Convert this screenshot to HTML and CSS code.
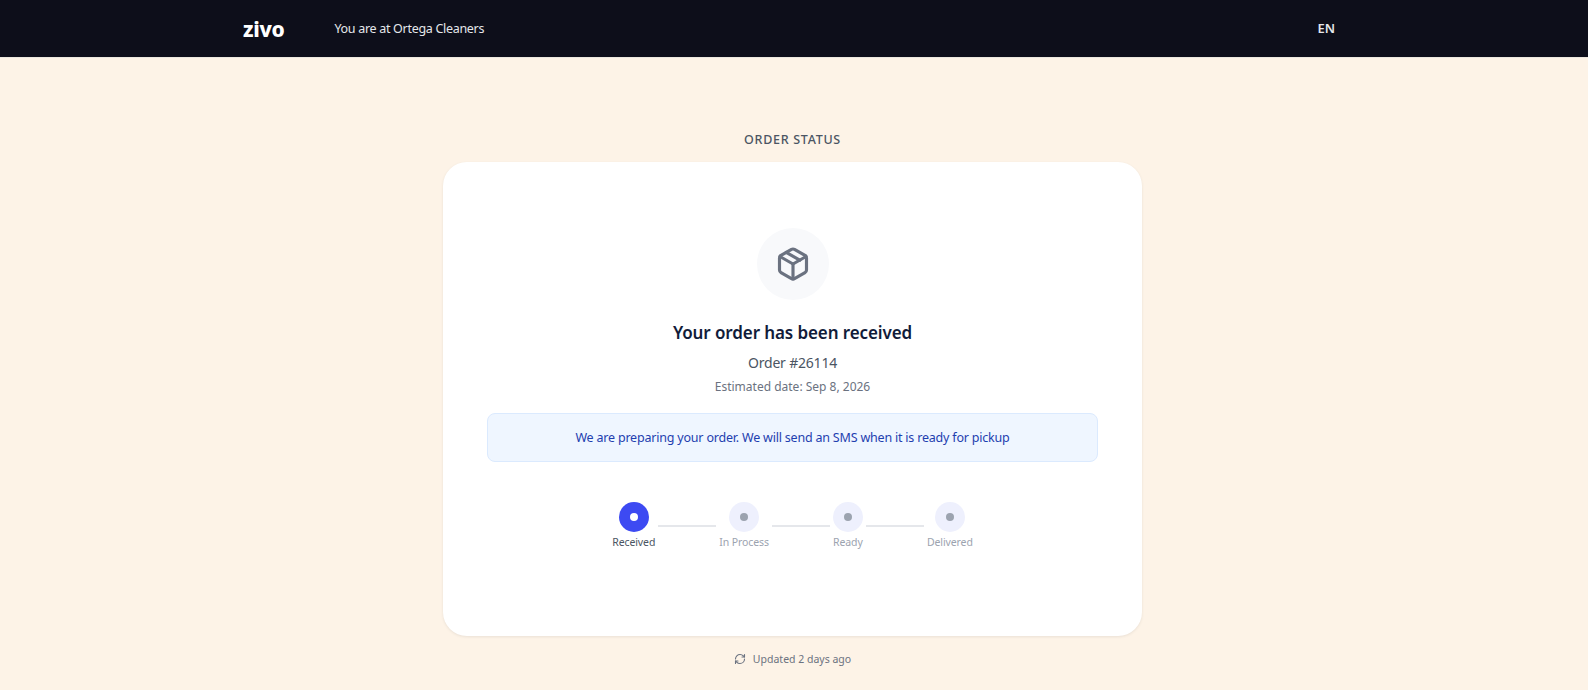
FILE: index.html
```html
<!DOCTYPE html>
<html lang="en">
<head>
  <meta charset="UTF-8">
  <meta name="viewport" content="width=device-width, initial-scale=1.0">
  <title>Order Status</title>
  <link rel="stylesheet" href="styles.css">
</head>
<body>
  <header class="topbar">
    <div class="topbar-inner">
      <div class="topbar-left">
        <span class="logo">zivo</span>
        <span class="location">You are at Ortega Cleaners</span>
      </div>
      <span class="lang">EN</span>
    </div>
  </header>
  <main class="page">
    <h1 class="page-title">ORDER STATUS</h1>
    <section class="card">
      <div class="icon-circle">
        <svg width="36" height="36" viewBox="0 0 24 24" fill="none" stroke="#6b7280" stroke-width="2.1" stroke-linecap="round" stroke-linejoin="round">
          <path d="M21 8a2 2 0 0 0-1-1.73l-7-4a2 2 0 0 0-2 0l-7 4A2 2 0 0 0 3 8v8a2 2 0 0 0 1 1.73l7 4a2 2 0 0 0 2 0l7-4A2 2 0 0 0 21 16Z"/>
          <path d="m3.3 7 8.7 5 8.7-5"/>
          <path d="M12 22V12"/>
          <path d="m7.5 4.27 9 5.15"/>
        </svg>
      </div>
      <h2 class="status-title">Your order has been received</h2>
      <p class="order-number">Order #26114</p>
      <p class="order-date">Estimated date: Sep 8, 2026</p>
      <div class="notice">We are preparing your order. We will send an SMS when it is ready for pickup</div>
      <div class="steps">
        <div class="step step-active">
          <span class="step-dot"></span>
          <span class="step-label">Received</span>
        </div>
        <span class="step-line"></span>
        <div class="step">
          <span class="step-dot"></span>
          <span class="step-label">In Process</span>
        </div>
        <span class="step-line"></span>
        <div class="step">
          <span class="step-dot"></span>
          <span class="step-label">Ready</span>
        </div>
        <span class="step-line"></span>
        <div class="step">
          <span class="step-dot"></span>
          <span class="step-label">Delivered</span>
        </div>
      </div>
    </section>
    <p class="updated">
      <svg width="12" height="12" viewBox="0 0 24 24" fill="none" stroke="#6b7280" stroke-width="2.2" stroke-linecap="round" stroke-linejoin="round">
        <path d="M3 12a9 9 0 0 1 9-9 9.75 9.75 0 0 1 6.74 2.74L21 8"/>
        <path d="M21 3v5h-5"/>
        <path d="M21 12a9 9 0 0 1-9 9 9.75 9.75 0 0 1-6.74-2.74L3 16"/>
        <path d="M8 16H3v5"/>
      </svg>
      Updated 2 days ago
    </p>
  </main>
</body>
</html>
```

FILE: styles.css
```css
* {
  box-sizing: border-box;
}
body {
  margin: 0;
  font-family: "Noto Sans", "Open Sans", sans-serif;
  background-color: #fdf3e7;
  color: #111827;
}
.topbar {
  background: #0d0e1a;
  height: 58px;
  border-bottom: 1px solid #ece7df;
}
.topbar-inner {
  max-width: 1152px;
  height: 57px;
  margin: 0 auto;
  padding: 0 24px 0 25px;
  display: flex;
  align-items: center;
  justify-content: space-between;
}
.topbar-left {
  display: flex;
  align-items: center;
  gap: 50px;
}
.logo {
  color: #fff;
  font-size: 21px;
  font-weight: 800;
  letter-spacing: -0.3px;
}
.location {
  color: #e5e7eb;
  font-size: 12.5px;
  letter-spacing: -0.3px;
}
.lang {
  padding: 0 11px 2px 0;
  color: #e5e7eb;
  font-size: 13px;
  font-weight: 600;
}
.page {
  display: flex;
  flex-direction: column;
  align-items: center;
  padding: 72px 3px 0 0;
}
.page-title {
  margin: 0 0 12px;
  font-size: 12.5px;
  line-height: 20px;
  font-weight: 500;
  letter-spacing: 0.7px;
  color: #4b5563;
}
.card {
  width: 699px;
  height: 474px;
  padding: 66px 44px 0;
  background: #fff;
  border-radius: 24px;
  box-shadow: 0 1px 3px rgba(0, 0, 0, 0.08);
  display: flex;
  flex-direction: column;
  align-items: center;
}
.icon-circle {
  width: 72px;
  height: 72px;
  border-radius: 50%;
  background: #f8f9fb;
  display: flex;
  align-items: center;
  justify-content: center;
}
.status-title {
  margin: 20px 0 0;
  font-size: 17px;
  line-height: 26px;
  font-weight: 600;
  letter-spacing: -0.1px;
  color: #111c3a;
}
.order-number {
  margin: 7px 0 0;
  font-size: 14px;
  line-height: 20px;
  letter-spacing: -0.2px;
  color: #4b5563;
}
.order-date {
  margin: 4px 0 0;
  font-size: 12px;
  line-height: 20px;
  color: #6b7280;
}
.notice {
  width: 100%;
  height: 49px;
  margin-top: 16px;
  display: flex;
  align-items: center;
  justify-content: center;
  background: #eff6ff;
  border: 1px solid #dbeafe;
  border-radius: 8px;
  font-size: 12.5px;
  letter-spacing: -0.2px;
  color: #1e40af;
}
.steps {
  display: flex;
  align-items: flex-start;
  margin-top: 40px;
}
.step {
  display: flex;
  flex-direction: column;
  align-items: center;
  gap: 2px;
}
.step-dot {
  width: 30px;
  height: 30px;
  border-radius: 50%;
  background: #eef0fd;
  display: flex;
  align-items: center;
  justify-content: center;
}
.step-dot::after {
  content: "";
  width: 8px;
  height: 8px;
  border-radius: 50%;
  background: #9ca3af;
}
.step-label {
  font-size: 10.5px;
  line-height: 16px;
  letter-spacing: -0.1px;
  color: #9ca3af;
}
.step-active .step-dot {
  background: #3d4af2;
}
.step-active .step-dot::after {
  background: #fff;
}
.step-active .step-label {
  color: #4b5563;
}
.step-line {
  width: 58px;
  height: 2px;
  margin: 23px 3px 0;
  background: #e5e7eb;
}
.updated {
  margin: 15px 0 0;
  display: flex;
  align-items: center;
  gap: 7px;
  font-size: 10.5px;
  line-height: 16px;
  color: #6b7280;
}
```
